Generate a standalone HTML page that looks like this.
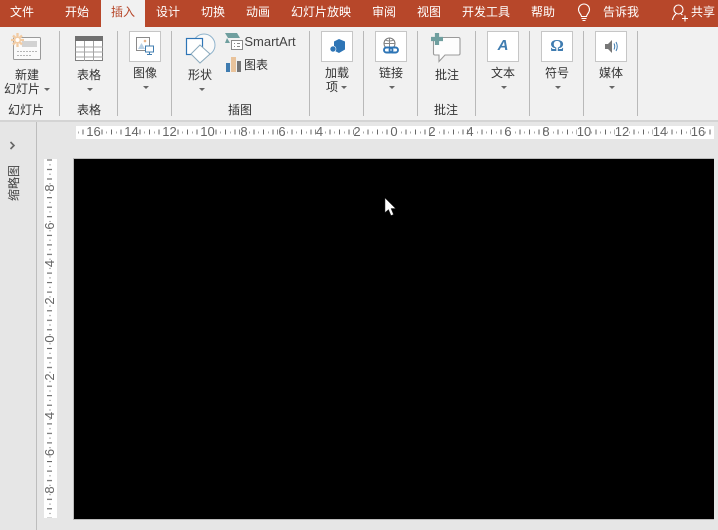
<!DOCTYPE html>
<html><head><meta charset="utf-8">
<style>
html,body{margin:0;padding:0}
body{width:718px;height:530px;overflow:hidden;position:relative;background:#e6e6e6;font-family:"Liberation Sans","Noto Sans CJK SC",sans-serif;font-size:12px;color:#333}
.a{position:absolute}
.t{position:absolute;transform:translateX(-50%);white-space:nowrap;line-height:16px;height:16px}
.tab{color:#fff;top:4px;font-size:12px}
.sep{position:absolute;top:31px;width:1px;height:85px;background:#b9b9b9}
.box{position:absolute;top:31px;width:30px;height:29px;background:#fff;border:1px solid #c6c6c6}
.arr{position:absolute;width:0;height:0;border-left:3px solid transparent;border-right:3px solid transparent;border-top:3px solid #666}
svg{position:absolute;overflow:visible}
.rn{font:13px "Liberation Sans",sans-serif;fill:#666;text-anchor:middle}
</style></head><body>
<div class="a" style="left:0;top:0;width:718px;height:27px;background:#b7472a"></div>
<div class="a" style="left:101px;top:0;width:44px;height:27px;background:#f1f1f1"></div>
<div class="a" style="left:0;top:27px;width:718px;height:93px;background:#f1f1f1"></div>
<div class="a" style="left:0;top:120px;width:718px;height:2px;background:#d4d4d4"></div>

<span class="t tab" style="left:22px">文件</span>
<span class="t tab" style="left:77px">开始</span>
<span class="t tab" style="left:123px;color:#b7472a">插入</span>
<span class="t tab" style="left:168px">设计</span>
<span class="t tab" style="left:213px">切换</span>
<span class="t tab" style="left:258px">动画</span>
<span class="t tab" style="left:321px">幻灯片放映</span>
<span class="t tab" style="left:384px">审阅</span>
<span class="t tab" style="left:429px">视图</span>
<span class="t tab" style="left:486px">开发工具</span>
<span class="t tab" style="left:543px">帮助</span>
<span class="t tab" style="left:621px">告诉我</span>
<span class="t tab" style="left:703px">共享</span>
<svg style="left:576px;top:3px" width="16" height="20" viewBox="0 0 16 20" fill="none" stroke="#fff" stroke-width="1.1"><path d="M5.5 13.5C5.2 11 2.500 10 2.500 6.500A5.500 5.500 0 0 1 13.500 6.500C13.500 10 10.800 11 10.500 13.500Z"/><path d="M5.500 15.500H10.500M6.500 17.500H9.500"/></svg>
<svg style="left:671px;top:3px" width="18" height="18" viewBox="0 0 18 18" fill="none" stroke="#fff" stroke-width="1.1"><circle cx="7.500" cy="6.500" r="4.500"/><path d="M1.500 17C2 14 3.500 12 5 11M10 11C10.500 11.300 11 11.600 11.500 12M11 15.500H17M14 12.500V18.500"/></svg>

<div class="sep" style="left:59px"></div>
<div class="sep" style="left:117px"></div>
<div class="sep" style="left:171px"></div>
<div class="sep" style="left:309px"></div>
<div class="sep" style="left:363px"></div>
<div class="sep" style="left:417px"></div>
<div class="sep" style="left:475px"></div>
<div class="sep" style="left:529px"></div>
<div class="sep" style="left:583px"></div>
<div class="sep" style="left:637px"></div>

<!-- new slide -->
<svg style="left:10px;top:32px" width="32" height="30" viewBox="0 0 32 30">
<rect x="3.500" y="5.500" width="27" height="22" rx="1" fill="#fafafa" stroke="#9a9a9a"/>
<rect x="12" y="9" width="15" height="6" fill="#d2d2d2"/>
<path d="M7 19.500H27M7 23.500H22" stroke="#b5b5b5" stroke-dasharray="2 1"/>
<g stroke="#f2cba3" stroke-width="2.300"><path d="M7.500 1V15M1 8H14M3 3.500L12 12.500M12 3.500L3 12.500"/></g>
<circle cx="7.500" cy="8" r="2" fill="#fff"/>
</svg>
<span class="t" style="left:27px;top:67px">新建</span>
<span class="t" style="left:22px;top:81px">幻灯片</span>
<div class="arr" style="left:44px;top:88px"></div>
<span class="t" style="left:26px;top:102px">幻灯片</span>

<!-- table -->
<svg style="left:75px;top:36px" width="29" height="26" viewBox="0 0 29 26">
<rect x=".5" y=".5" width="27" height="24" fill="#fff" stroke="#7f7f7f"/>
<rect x="0" y="0" width="28" height="5" fill="#707070"/>
<path d="M.5 11H28M.5 16H28M.5 21H28M9.500 5V25M18.500 5V25" stroke="#a5a5a5" fill="none"/>
</svg>
<span class="t" style="left:89px;top:67px">表格</span>
<div class="arr" style="left:87px;top:88px"></div>
<span class="t" style="left:89px;top:102px">表格</span>

<!-- image -->
<div class="box" style="left:129px"></div>
<svg style="left:136px;top:37px" width="18" height="18" viewBox="0 0 18 18">
<rect x=".5" y=".5" width="13" height="13" fill="#fff" stroke="#8a8a8a"/>
<circle cx="9" cy="4" r="1.300" fill="#e8b48a"/>
<path d="M2 12L5.500 6L9 12Z" fill="#b9cfe3"/>
<rect x="9.500" y="9" width="8" height="6" fill="#fff" stroke="#3f7cb0"/>
<path d="M13.500 15V17M11 17.500H16" stroke="#3f7cb0"/>
</svg>
<span class="t" style="left:145px;top:65px">图像</span>
<div class="arr" style="left:143px;top:86px"></div>

<!-- shapes -->
<svg style="left:185px;top:33px" width="32" height="32" viewBox="0 0 32 32" fill="none">
<circle cx="19" cy="12" r="11" stroke="#8fb3cc" fill="#fafafa"/>
<rect x="1.500" y="5.500" width="16" height="16" stroke="#2e75b6" stroke-width="1.200" fill="#fff"/>
<path d="M15 12L25 21L15 30L6 21Z" stroke="#8aaabd" fill="#fff"/>
</svg>
<span class="t" style="left:200px;top:67px">形状</span>
<div class="arr" style="left:199px;top:88px"></div>

<!-- smartart -->
<svg style="left:224px;top:32px" width="19" height="19" viewBox="0 0 19 19">
<path d="M1 1H13L16 6H4Z" fill="#6f9f9f"/><path d="M3 6L6 11H1Z" fill="#6f9f9f"/>
<rect x="7.500" y="8.500" width="11" height="9" fill="#fff" stroke="#8a8a8a"/>
<path d="M10 11.500H11M10 14.500H11M13 11.500H16M13 14.500H16" stroke="#8a8a8a"/>
</svg>
<span class="t" style="left:270px;top:34px;font-size:13px;color:#444">SmartArt</span>
<svg style="left:226px;top:57px" width="15" height="15" viewBox="0 0 15 15">
<rect x="0" y="6" width="4" height="9" fill="#3f7cb0"/><rect x="5" y="0" width="5" height="15" fill="#e9c39b"/><rect x="11" y="4" width="4" height="11" fill="#757575"/>
</svg>
<span class="t" style="left:256px;top:57px">图表</span>
<span class="t" style="left:240px;top:102px">插图</span>

<!-- addin -->
<div class="box" style="left:321px"></div>
<svg style="left:329px;top:38px" width="17" height="16" viewBox="0 0 17 16">
<path d="M10 1L16 3.500V11.500L10 15L5 12.500V3.500Z" fill="#2e75b6"/><circle cx="4" cy="11" r="3" fill="#2e75b6" stroke="#fff" stroke-width=".6"/>
</svg>
<span class="t" style="left:337px;top:65px">加载</span>
<span class="t" style="left:332px;top:79px">项</span>
<div class="arr" style="left:341px;top:86px"></div>

<!-- link -->
<div class="box" style="left:375px"></div>
<svg style="left:383px;top:37px" width="17" height="18" viewBox="0 0 17 18" fill="none">
<circle cx="6.500" cy="6.500" r="5.500" stroke="#777" fill="#fff"/><path d="M1 6.500H12M6.500 1V10M2.500 3Q6.500 5 10.500 3" stroke="#888"/>
<rect x="1" y="10.500" width="8.500" height="5" rx="2.500" stroke="#2e75b6" stroke-width="1.900" fill="#fff"/>
<rect x="6.500" y="10.500" width="8.500" height="5" rx="2.500" stroke="#2e75b6" stroke-width="1.900"/>
</svg>
<span class="t" style="left:391px;top:65px">链接</span>
<div class="arr" style="left:389px;top:86px"></div>

<!-- comment -->
<svg style="left:431px;top:32px" width="32" height="31" viewBox="0 0 32 31" fill="none">
<path d="M4 5.500H27.500A1.500 1.500 0 0 1 29 7V21.500A1.500 1.500 0 0 1 27.500 23H14L8 29.500V23H4A1.500 1.500 0 0 1 2.500 21.500V7A1.500 1.500 0 0 1 4 5.500Z" stroke="#9a9a9a" stroke-width="1.100" fill="#fdfdfd"/>
<path d="M6 1V13M0 7H12" stroke="#6f9f9f" stroke-width="4.200"/>
</svg>
<span class="t" style="left:447px;top:67px">批注</span>
<span class="t" style="left:446px;top:102px">批注</span>

<!-- text -->
<div class="box" style="left:487px"></div>
<span class="t" style="left:503px;top:37px;font:italic bold 15px/18px 'Liberation Sans',sans-serif;color:#3f7cb0">A</span>
<span class="t" style="left:503px;top:65px">文本</span>
<div class="arr" style="left:501px;top:86px"></div>

<!-- symbol -->
<div class="box" style="left:541px"></div>
<span class="t" style="left:557px;top:37px;font:bold 17px/18px 'Liberation Serif',serif;color:#3f7cb0">Ω</span>
<span class="t" style="left:557px;top:65px">符号</span>
<div class="arr" style="left:555px;top:86px"></div>

<!-- media -->
<div class="box" style="left:595px"></div>
<svg style="left:605px;top:40px" width="14" height="13" viewBox="0 0 14 13" fill="none">
<path d="M0 4H3L7 0V13L3 9H0Z" fill="#777"/><path d="M9 3.500Q10.500 6.500 9 9.500" stroke="#3f7cb0"/><path d="M11 2Q13.500 6.500 11 11" stroke="#3f7cb0"/>
</svg>
<span class="t" style="left:611px;top:65px">媒体</span>
<div class="arr" style="left:609px;top:86px"></div>

<!-- left pane -->
<div class="a" style="left:36px;top:122px;width:1px;height:408px;background:#bdbdbd"></div>
<svg style="left:9px;top:141px" width="7" height="9" viewBox="0 0 7 9" fill="none"><path d="M1.500 1L5 4.500L1.500 8" stroke="#666" stroke-width="1.600"/></svg>
<span class="a" style="left:14px;top:183px;transform:translate(-50%,-50%) rotate(-90deg);white-space:nowrap;line-height:14px;color:#444">缩略图</span>

<!-- top ruler -->
<svg style="left:76px;top:126px" width="638" height="13" viewBox="76 126 638 13">
<defs><pattern id="h" x="394" y="126" width="38" height="13" patternUnits="userSpaceOnUse">
<rect x="7" y="5.500" width="1" height="2" fill="#aaa"/><rect x="11.500" y="3.500" width="1" height="5" fill="#666"/><rect x="16" y="5.500" width="1" height="2" fill="#aaa"/><rect x="21" y="3.500" width="1" height="5" fill="#666"/><rect x="26" y="5.500" width="1" height="2" fill="#aaa"/><rect x="30.500" y="3.500" width="1" height="5" fill="#666"/><rect x="35" y="3.500" width="1" height="5" fill="#888"/>
</pattern></defs>
<rect x="76" y="126" width="638" height="13" fill="#fff"/>
<rect x="76" y="126" width="638" height="13" fill="url(#h)"/>
<g fill="#fff">
<rect x="86.500" y="126" width="14" height="13"/><rect x="124.500" y="126" width="14" height="13"/><rect x="162.500" y="126" width="14" height="13"/><rect x="200.500" y="126" width="14" height="13"/><rect x="577" y="126" width="14" height="13"/><rect x="615" y="126" width="14" height="13"/><rect x="653" y="126" width="14" height="13"/><rect x="691" y="126" width="14" height="13"/>
</g>
<text class="rn" x="93.500" y="136">16</text><text class="rn" x="131.500" y="136">14</text><text class="rn" x="169.500" y="136">12</text><text class="rn" x="207.500" y="136">10</text><text class="rn" x="244" y="136">8</text><text class="rn" x="282" y="136">6</text><text class="rn" x="319.500" y="136">4</text><text class="rn" x="357" y="136">2</text><text class="rn" x="394" y="136">0</text><text class="rn" x="432" y="136">2</text><text class="rn" x="470" y="136">4</text><text class="rn" x="508" y="136">6</text><text class="rn" x="546" y="136">8</text><text class="rn" x="584" y="136">10</text><text class="rn" x="622" y="136">12</text><text class="rn" x="660" y="136">14</text><text class="rn" x="698" y="136">16</text>
</svg>

<!-- left ruler -->
<svg style="left:44px;top:159px" width="13" height="359" viewBox="44 159 13 359">
<defs><pattern id="v" x="44" y="339" width="13" height="37.700" patternUnits="userSpaceOnUse">
<rect x="5" y="4.300" width="2" height="1" fill="#aaa"/><rect x="3" y="9" width="5" height="1" fill="#555"/><rect x="5" y="13.800" width="2" height="1" fill="#aaa"/><rect x="3" y="18.500" width="5" height="1" fill="#555"/><rect x="5" y="23.200" width="2" height="1" fill="#aaa"/><rect x="3" y="28" width="5" height="1" fill="#555"/><rect x="5" y="32.800" width="2" height="1" fill="#aaa"/>
</pattern></defs>
<rect x="44" y="159" width="13" height="359" fill="#fff"/>
<rect x="44" y="159" width="13" height="359" fill="url(#v)"/>
<text class="rn" transform="translate(54 188) rotate(-90)">8</text>
<text class="rn" transform="translate(54 226) rotate(-90)">6</text>
<text class="rn" transform="translate(54 263.500) rotate(-90)">4</text>
<text class="rn" transform="translate(54 301) rotate(-90)">2</text>
<text class="rn" transform="translate(54 339) rotate(-90)">0</text>
<text class="rn" transform="translate(54 377) rotate(-90)">2</text>
<text class="rn" transform="translate(54 415.500) rotate(-90)">4</text>
<text class="rn" transform="translate(54 452.500) rotate(-90)">6</text>
<text class="rn" transform="translate(54 490) rotate(-90)">8</text>
</svg>

<!-- slide -->
<div class="a" style="left:73px;top:158px;width:641px;height:362px;background:#000;border-left:1px solid #bbb;border-top:1px solid #bbb;border-bottom:1px solid #bbb;box-sizing:border-box"></div>

<!-- cursor -->
<svg style="left:384px;top:197px" width="13" height="20" viewBox="0 0 13 20">
<path d="M1 1V15.500L4.500 12.500L7 18.500L9.500 17.500L7 11.500H11.500Z" fill="#fff" stroke="#333" stroke-width=".5"/>
</svg>
</body></html>
